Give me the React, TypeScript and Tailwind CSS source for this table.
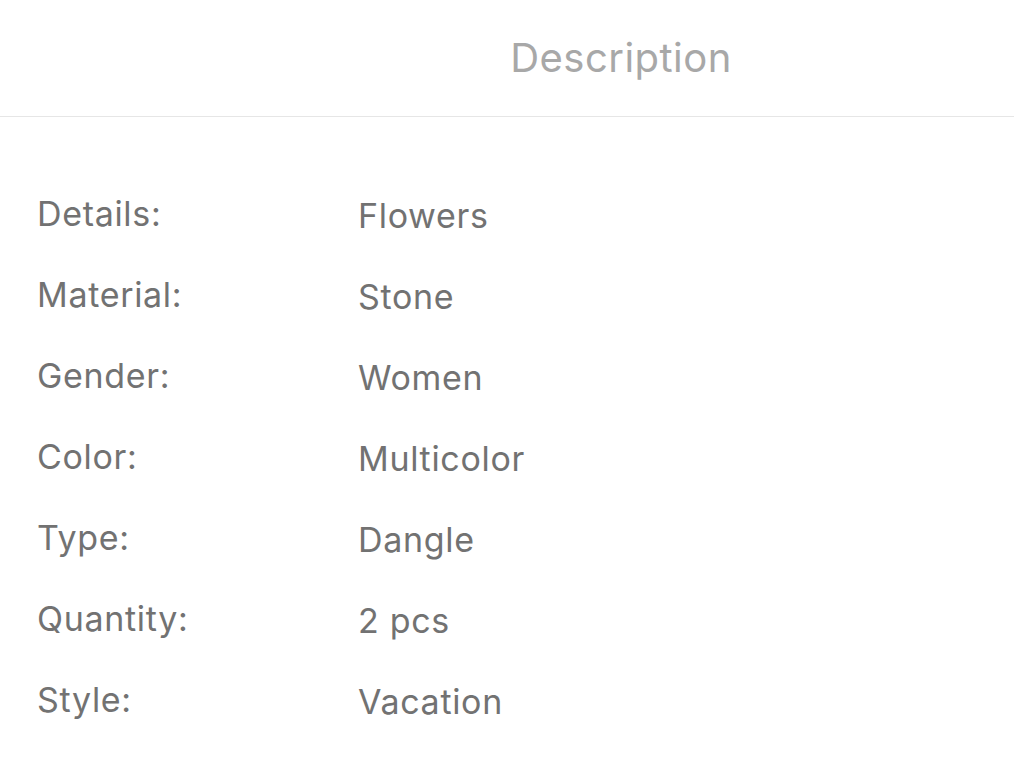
import React from "react";

const rows: [string, string][] = [
  ["Details:", "Flowers"],
  ["Material:", "Stone"],
  ["Gender:", "Women"],
  ["Color:", "Multicolor"],
  ["Type:", "Dangle"],
  ["Quantity:", "2 pcs"],
  ["Style:", "Vacation"],
];

export default function App() {
  return (
    <div className="w-[1014px] h-[763px] bg-white overflow-hidden" style={{ fontFamily: "Inter, 'Noto Sans', sans-serif" }}>
      <div className="h-[117px] border-b border-[#e6e6e6] flex items-center justify-center pl-[228px]">
        <span className="text-[40px] tracking-[0.012em] text-[#a8a8a8] leading-none -mt-[1px]">Description</span>
      </div>
      <div className="pt-[66px] pl-[37px] flex flex-col">
        {rows.map(([k, v]) => (
          <div key={k} className="flex h-[81px] items-start">
            <span className="w-[321px] text-[34px] tracking-[0.02em] leading-[62px] text-[#727272]">{k}</span>
            <span className="text-[34px] tracking-[0.02em] leading-[62px] text-[#727272] pt-[2px]">{v}</span>
          </div>
        ))}
      </div>
    </div>
  );
}
